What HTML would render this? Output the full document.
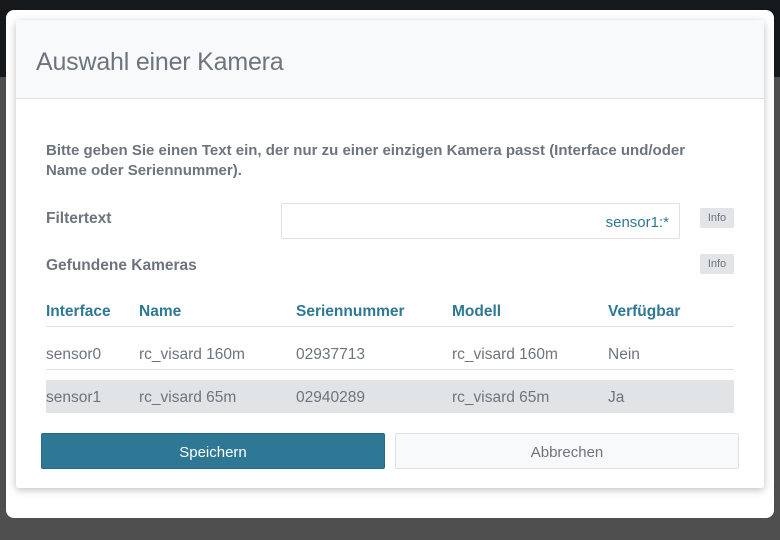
<!DOCTYPE html>
<html><head><meta charset="utf-8"><style>
*{box-sizing:border-box;margin:0;padding:0}
body{width:780px;height:540px;overflow:hidden;background:#4e4e4e;font-family:"Liberation Sans",sans-serif;position:relative}
.top{position:absolute;left:0;top:0;width:780px;height:77px;background:#16191c}
.outer{position:absolute;left:6px;top:10px;width:768px;height:508px;background:#fff;border-radius:8px}
.card{position:absolute;left:16px;top:20px;width:748px;height:468px;background:#fff;box-shadow:0 2px 8px rgba(0,0,0,.25);border-radius:3px}
.hdr{position:absolute;left:0;top:0;width:748px;height:79px;background:#f8f9fa;border-bottom:1px solid #dee2e6}
.title{position:absolute;left:20px;top:28px;font-size:25px;color:#6c757d;font-weight:300;letter-spacing:-0.2px}
.t{position:absolute;color:#6c757d;font-size:15.5px}
.b{font-weight:bold}
.p{left:30px;top:121px;width:670px;line-height:19.5px;font-weight:bold;font-size:15px;letter-spacing:0}
.inp{position:absolute;left:265px;top:183px;width:399px;height:36px;border:1px solid #dee2e6;border-radius:2px}
.info{position:absolute;left:684px;width:34px;height:20px;background:#e2e5e8;border-radius:2px;font-size:11px;color:#6c757d;text-align:center;line-height:20px}
.th{color:#2e7896;font-weight:bold;top:283px;font-size:15.5px}
.line{position:absolute;left:30px;width:688px;height:1px;background:#dee2e6}
.row2{position:absolute;left:30px;top:360px;width:688px;height:33px;background:#e1e4e7}
.btn{position:absolute;top:413px;height:36px;width:344px;border-radius:2px;text-align:center;line-height:37px;font-size:15px}
</style></head><body>
<div class="top"></div>
<div class="outer"></div>
<div class="card">
<div class="hdr"><div class="title">Auswahl einer Kamera</div></div>
<div class="t p">Bitte geben Sie einen Text ein, der nur zu einer einzigen Kamera passt (Interface und/oder<br>Name oder Seriennummer).</div>
<div class="t b" style="left:30px;top:190px;font-size:15.5px">Filtertext</div>
<div class="inp"><span style="position:absolute;right:10px;top:10px;font-size:15px;color:#2e7896">sensor1:*</span></div>
<div class="info" style="top:188px">Info</div>
<div class="t b" style="left:30px;top:237px;font-size:15.5px">Gefundene Kameras</div>
<div class="info" style="top:234px">Info</div>
<div class="t th" style="left:30px">Interface</div>
<div class="t th" style="left:123px">Name</div>
<div class="t th" style="left:280px">Seriennummer</div>
<div class="t th" style="left:436px">Modell</div>
<div class="t th" style="left:592px">Verfügbar</div>
<div class="line" style="top:306px"></div>
<div class="t" style="left:30px;top:326px">sensor0</div>
<div class="t" style="left:123px;top:326px">rc_visard 160m</div>
<div class="t" style="left:280px;top:326px">02937713</div>
<div class="t" style="left:436px;top:326px">rc_visard 160m</div>
<div class="t" style="left:592px;top:326px">Nein</div>
<div class="line" style="top:349px"></div>
<div class="row2"></div>
<div class="t" style="left:30px;top:369px">sensor1</div>
<div class="t" style="left:123px;top:369px">rc_visard 65m</div>
<div class="t" style="left:280px;top:369px">02940289</div>
<div class="t" style="left:436px;top:369px">rc_visard 65m</div>
<div class="t" style="left:592px;top:369px">Ja</div>
<div class="btn" style="left:25px;background:#2e7896;color:#fff;border:1px solid #256a86">Speichern</div>
<div class="btn" style="left:379px;background:#f8f9fa;color:#6c757d;border:1px solid #dee2e6">Abbrechen</div>
</div>
</body></html>
